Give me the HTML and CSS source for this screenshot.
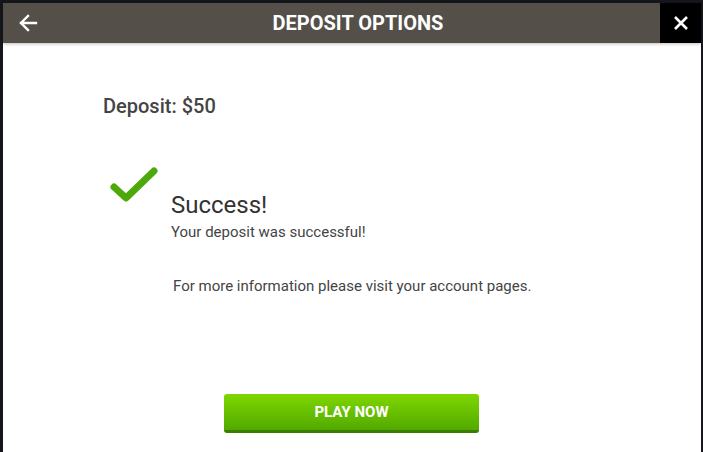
FILE: index.html
```html
<!DOCTYPE html>
<html>
<head>
<meta charset="utf-8">
<link rel="stylesheet" href="styles.css">
</head>
<body>
<div class="modal">
  <div class="header">
    <button class="back" aria-label="Back">
      <svg width="20" height="18" viewBox="0 0 20 18"><path d="M18 9H3M10 2L3 9l7 7" fill="none" stroke="#fff" stroke-width="2.4" stroke-linecap="square"/></svg>
    </button>
    <div class="title">DEPOSIT OPTIONS</div>
    <button class="close" aria-label="Close">
      <svg width="16" height="16" viewBox="0 0 16 16"><path d="M2 2L14 14M14 2L2 14" fill="none" stroke="#fff" stroke-width="2.6"/></svg>
    </button>
  </div>
  <div class="content">
    <div class="amount">Deposit: $50</div>
    <div class="result">
      <svg class="check" width="52" height="40" viewBox="0 0 52 40"><polyline points="6,22 18,33 46,6" fill="none" stroke="#4da90b" stroke-width="7" stroke-linecap="round" stroke-linejoin="round"/></svg>
      <div class="result-text">
        <div class="result-title">Success!</div>
        <div class="result-sub">Your deposit was successful!</div>
      </div>
    </div>
    <p class="info">For more information please visit your account pages.</p>
    <div class="actions">
      <button class="play">PLAY NOW</button>
    </div>
  </div>
</div>
</body>
</html>
```

FILE: styles.css
```css
html, body {
  margin: 0;
  height: 100%;
}
body {
  background: #14161c;
  font-family: Roboto, "Liberation Sans", sans-serif;
  overflow: hidden;
}
.modal {
  margin: 3px 2px 0 3px;
  background: #fff;
  height: 449px;
  display: flex;
  flex-direction: column;
}
.header {
  height: 40px;
  background: #544f48;
  display: flex;
  align-items: center;
  box-shadow: 0 1px 3px rgba(0,0,0,0.25);
  position: relative;
}
.back {
  width: 52px;
  height: 40px;
  border: 0;
  background: transparent;
  padding: 0 0 0 15px;
  display: flex;
  align-items: center;
  cursor: pointer;
}
.title {
  flex: 1;
  text-align: center;
  color: #fff;
  font-weight: 700;
  font-size: 20px;
  padding-left: 1px;
}
.close {
  width: 41px;
  height: 40px;
  border: 0;
  background: #000;
  display: flex;
  align-items: center;
  justify-content: center;
  padding: 0;
}
.content {
  padding: 51px 0 0 100px;
  color: #333;
}
.amount {
  font-size: 20px;
  line-height: 24px;
  font-weight: 500;
  color: #444;
}
.result {
  display: flex;
  margin-top: 47px;
}
.check {
  margin: 0 0 0 5px;
}
.result-text {
  margin-left: 11px;
  padding-top: 26px;
}
.result-title {
  font-size: 24px;
  color: #333;
  line-height: 28px;
}
.result-sub {
  font-size: 15px;
  line-height: 18px;
  color: #444;
  margin-top: 4px;
}
.info {
  margin: 36px 0 0 70px;
  font-size: 15px;
  line-height: 18px;
  color: #444;
}
.actions {
  margin-top: 99px;
  padding-left: 121px;
}
.play {
  width: 255px;
  height: 39px;
  border: 0;
  border-bottom: 3px solid #3a7e00;
  border-radius: 3px;
  background: linear-gradient(#7fd600, #52aa00);
  color: #fff;
  font-family: Roboto, "Liberation Sans", sans-serif;
  font-weight: 700;
  font-size: 15px;
  padding: 0;
}
```
